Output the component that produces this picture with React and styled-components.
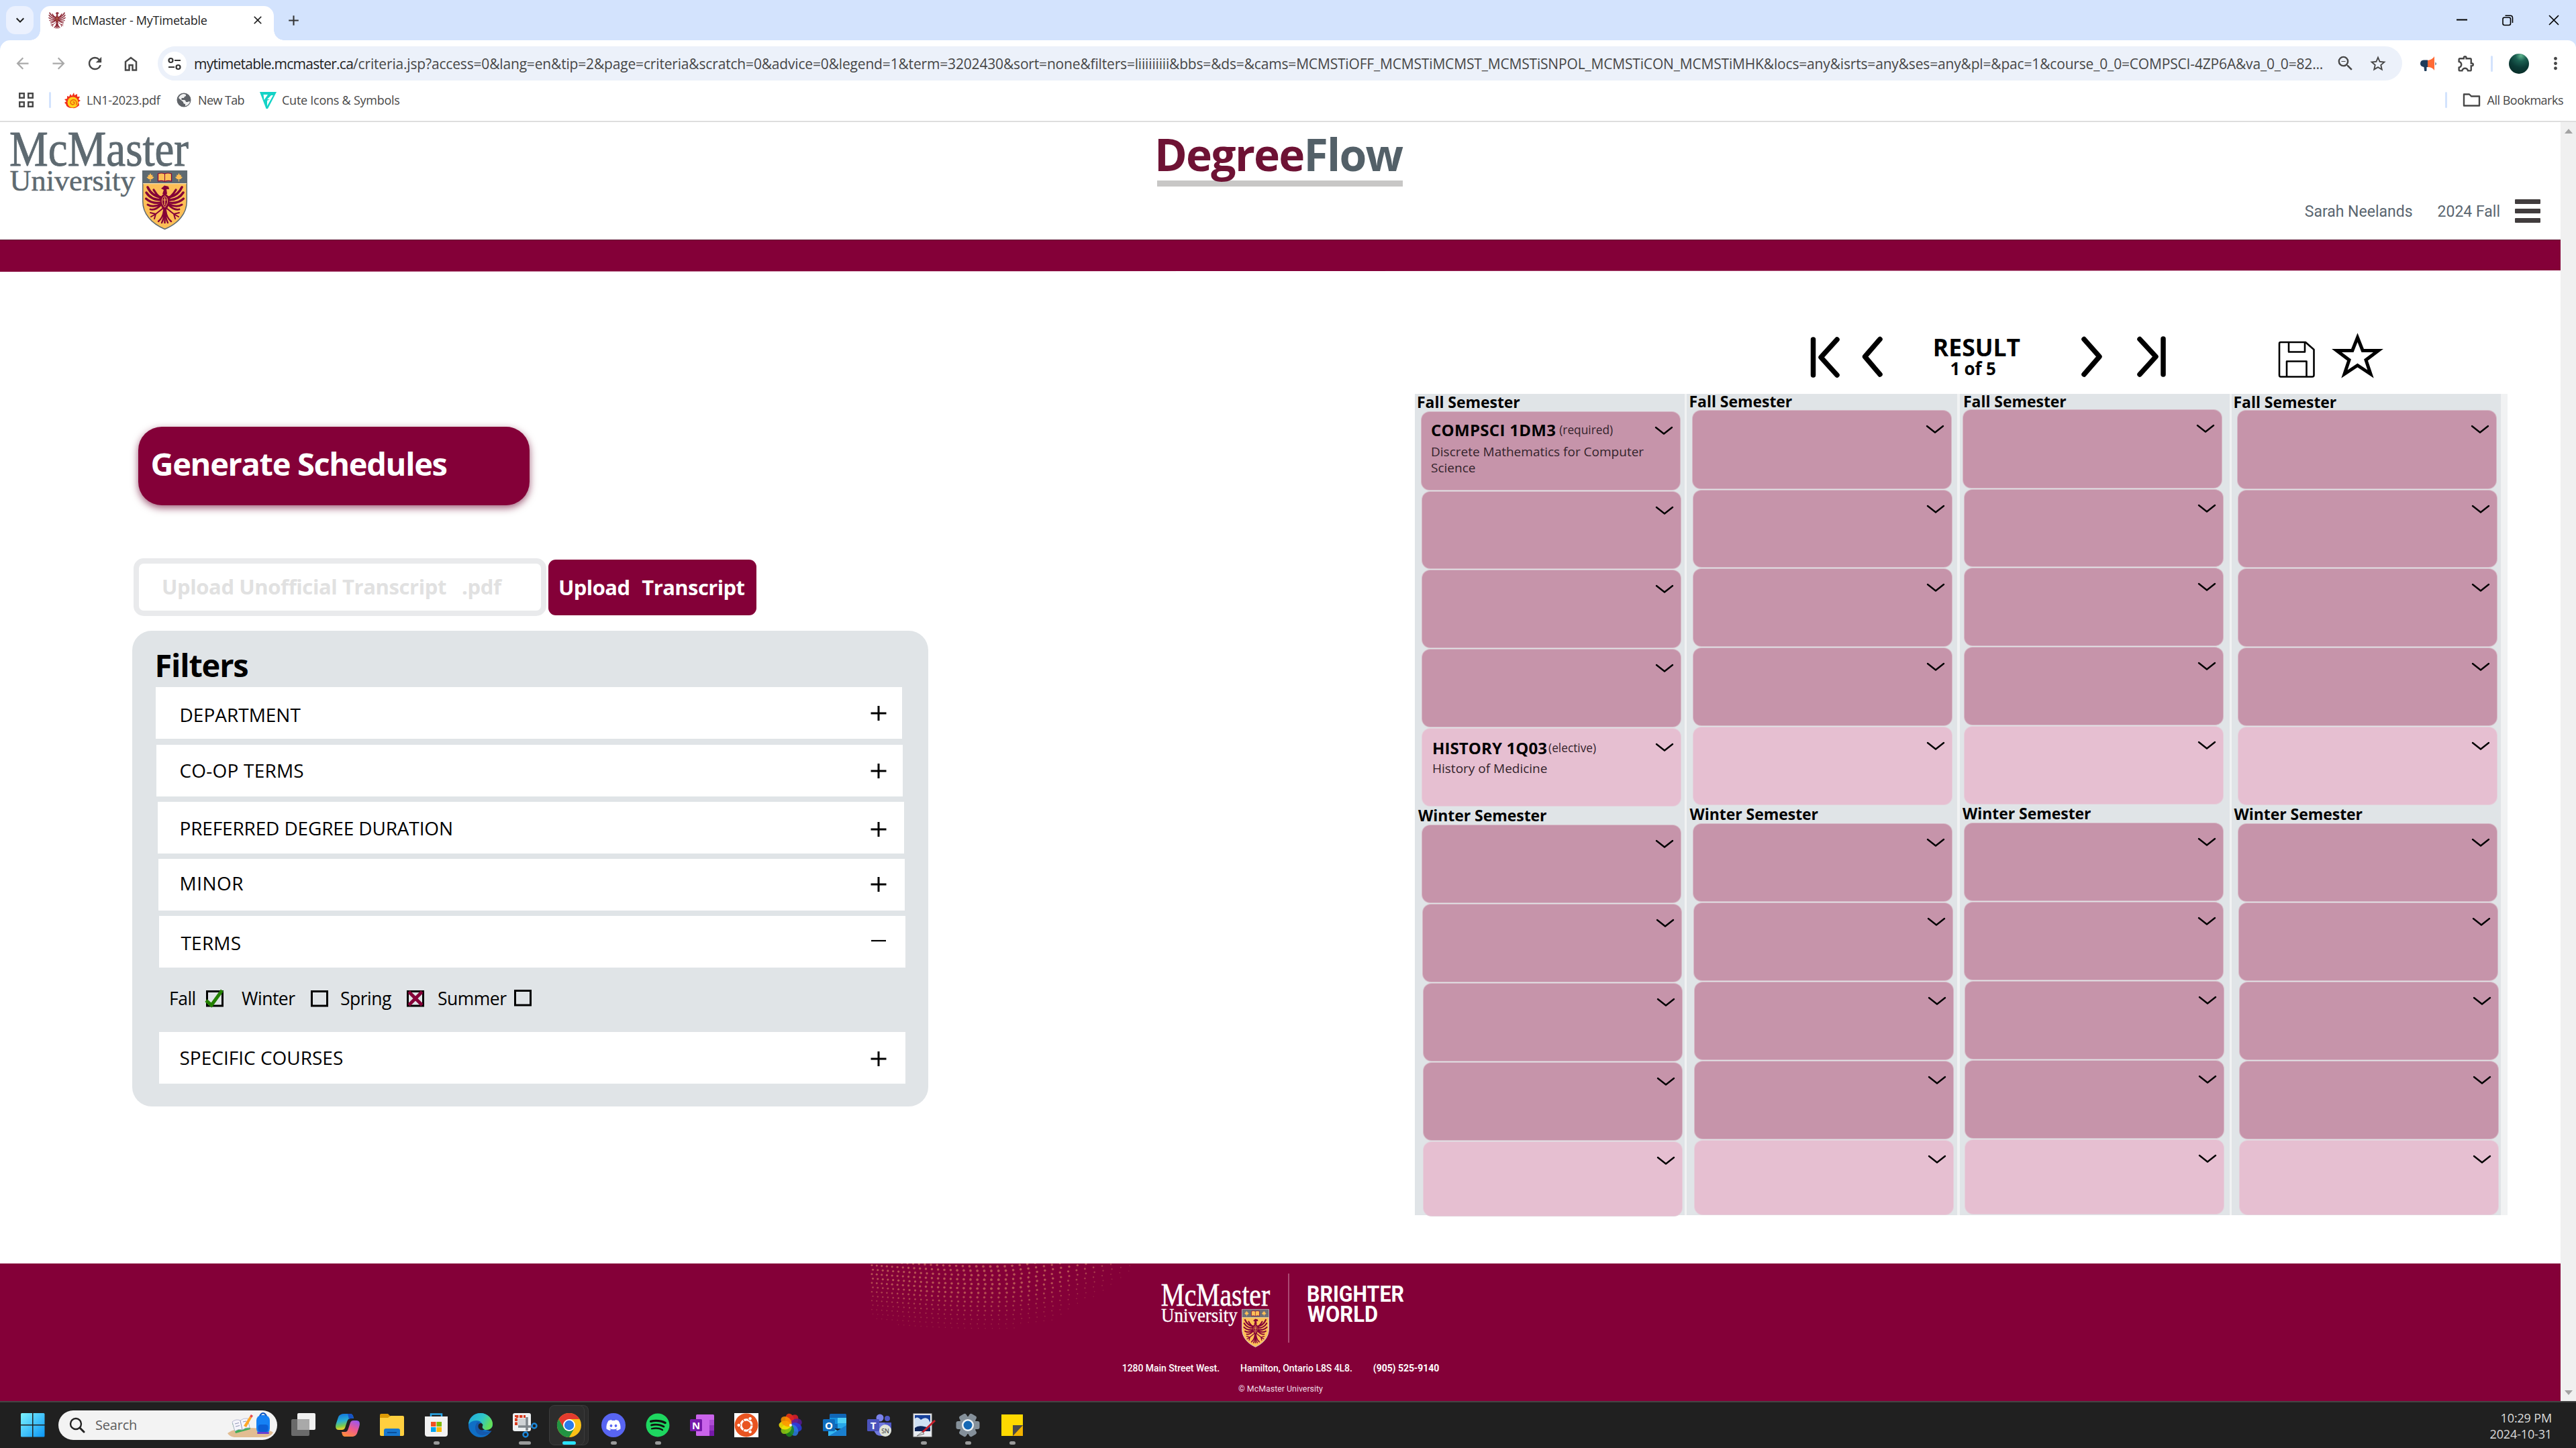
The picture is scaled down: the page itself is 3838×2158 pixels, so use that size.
import React from "react";
import styled, { createGlobalStyle, css } from "styled-components";
import {
  MdArrowBack,
  MdArrowForward,
  MdRefresh,
  MdOutlineZoomOut,
  MdStarBorder,
  MdOutlineExtension,
  MdMoreVert,
  MdKeyboardArrowDown,
  MdClose,
  MdAdd,
} from "react-icons/md";
import { FaDiscord, FaSpotify, FaUbuntu } from "react-icons/fa";

const sans = '"Open Sans", "Noto Sans", sans-serif';
const roboto = 'Roboto, "Open Sans", sans-serif';
const serif = '"Liberation Serif", serif';
const maroon = "#840038";
const slate = "#5e6a71";
const panel = "#e0e4e7";

const GlobalStyle = createGlobalStyle`
  * { box-sizing: border-box; }
  body { margin: 0; background: #fff; font-family: ${sans}; color: #000; }
  svg { display: block; flex: none; }
`;

const Screen = styled.div`
  width: 3838px;
  height: 2158px;
  display: flex;
  flex-direction: column;
  overflow: hidden;
`;

/* ---------- browser chrome ---------- */

const TabStrip = styled.div`
  height: 60px;
  flex: none;
  display: flex;
  background: #d3e3fd;
  padding: 9px 0 0 9px;
`;

const TabSearch = styled.div`
  width: 41px;
  height: 42px;
  border-radius: 14px;
  background: #ebf1fe;
  display: flex;
  align-items: center;
  justify-content: center;
  color: #1f1f1f;
`;

const Tab = styled.div`
  position: relative;
  width: 348px;
  height: 51px;
  margin-left: 10px;
  padding: 0 14px 9px 12px;
  border-radius: 15px 15px 0 0;
  background: #fff;
  display: flex;
  align-items: center;
  &::before,
  &::after {
    content: "";
    position: absolute;
    bottom: 0;
    width: 15px;
    height: 15px;
  }
  &::before {
    left: -15px;
    background: radial-gradient(circle at 0 0, transparent 14.5px, #fff 15px);
  }
  &::after {
    right: -15px;
    background: radial-gradient(circle at 100% 0, transparent 14.5px, #fff 15px);
  }
`;

const TabTitle = styled.span`
  flex: 1;
  margin-left: 9px;
  font-size: 18px;
  line-height: 24px;
  letter-spacing: -0.25px;
  color: #1f1f1f;
  white-space: nowrap;
`;

const NewTab = styled.div`
  width: 42px;
  height: 42px;
  margin-left: 8px;
  display: flex;
  align-items: center;
  justify-content: center;
  color: #333;
`;

const WindowControls = styled.div`
  margin: 0 -1.5px 0 auto;
  height: 42px;
  display: flex;
`;

const WindowButton = styled.div`
  width: 68.5px;
  display: flex;
  align-items: center;
  justify-content: center;
`;

const ToolbarBack = styled.div`
  background: #d3e3fd;
  flex: none;
`;

const Toolbar = styled.div`
  height: 69px;
  display: flex;
  align-items: center;
  padding-left: 6px;
  background: #fff;
  border-radius: 15px 12px 0 0;
`;

const ToolButton = styled.div`
  width: ${(p) => p.$w || 54}px;
  height: 54px;
  display: flex;
  align-items: center;
  justify-content: center;
  color: ${(p) => (p.$muted ? "#a9a9a9" : "#474747")};
`;

const Omnibox = styled.div`
  width: 3344px;
  height: 51px;
  margin: 0 12px 0 13px;
  padding: 0 11px 0 7px;
  border-radius: 26px;
  background: #ecf1fa;
  display: flex;
  align-items: center;
`;

const SiteInfo = styled.div`
  width: 36px;
  height: 36px;
  border-radius: 50%;
  background: #fff;
  display: flex;
  align-items: center;
  justify-content: center;
`;

const Url = styled.div`
  flex: 1;
  margin-left: 11px;
  font-size: 21px;
  line-height: 28px;
  letter-spacing: -0.17px;
  white-space: nowrap;
  color: #474747;
`;

const Domain = styled.span`
  color: #1f1f1f;
  letter-spacing: -0.75px;
`;

const Divider = styled.div`
  width: 3px;
  height: 24px;
  border-radius: 2px;
  background: #d3e3fd;
  margin: ${(p) => p.$m || "0"};
`;

const Avatar = styled.div`
  width: 30px;
  height: 30px;
  border-radius: 50%;
  margin-right: 12px;
  background: radial-gradient(circle at 60% 10%, #5fb58f 0, #1c6152 25%, #0b3b36 55%, #072722 100%);
`;

const BookmarksBar = styled.div`
  height: 53px;
  flex: none;
  display: flex;
  align-items: center;
  padding: 0 19px 11px 28px;
  border-bottom: 2px solid #dedede;
`;

const Bookmark = styled.div`
  display: flex;
  align-items: center;
  gap: ${(p) => p.$gap || 8}px;
  margin-left: ${(p) => p.$ml}px;
  width: ${(p) => (p.$w ? `${p.$w}px` : "auto")};
  font-size: 18px;
  line-height: 24px;
  letter-spacing: ${(p) => p.$ls || -0.25}px;
  color: #474747;
  white-space: nowrap;
`;

const Viewport = styled.div`
  flex: 1;
  min-height: 0;
  display: flex;
`;

const Scrollbar = styled.div`
  width: 23px;
  background: #f0f0f0;
  display: flex;
  flex-direction: column;
  justify-content: space-between;
  align-items: center;
  padding: 10px 0 9px;
`;

/* ---------- page header ---------- */

const Page = styled.div`
  width: 3815px;
  display: flex;
  flex-direction: column;
  background: #fff;
`;

const Header = styled.header`
  height: 175px;
  flex: none;
  display: grid;
  grid-template-columns: 1724px 367px 1fr;
`;

const LogoCell = styled.div`
  padding: 0 0 0 12px;
`;

const LogoSvg = styled.svg`
  overflow: visible;
`;

const Brand = styled.div`
  padding-top: 8px;
`;

const BrandName = styled.div`
  margin-left: -4px;
  font-size: 66px;
  font-weight: 700;
  line-height: 79px;
  letter-spacing: -1.75px;
  color: #6e1234;
  white-space: nowrap;
  position: relative;
  z-index: 1;
`;

const BrandTail = styled.span`
  color: #536068;
`;

const BrandRule = styled.div`
  width: 366px;
  height: 9px;
  background: #c8c7c6;
`;

const UserBar = styled.div`
  display: flex;
  justify-content: flex-end;
  align-items: center;
  padding: 90px 30px 0 0;
  font-family: ${roboto};
  font-size: 23px;
  line-height: 30px;
  color: #5a6670;
  white-space: nowrap;
`;

const UserName = styled.span`
  padding-top: 2px;
  margin-right: 37px;
`;

const Term = styled.span`
  padding-top: 2px;
  margin-right: 22px;
`;

const Hamburger = styled.div`
  width: 38px;
  display: flex;
  flex-direction: column;
  gap: 7.5px;
`;

const HamburgerBar = styled.div`
  height: 6.5px;
  border-radius: 1px;
  background: #413c3d;
`;

const Band = styled.div`
  height: 48px;
  flex: none;
  background: ${maroon};
  border-top: 1px solid #5c1030;
  clip-path: polygon(0 0, 100% 0, 100% 46px, 0 48px);
`;

/* ---------- main ---------- */

const Main = styled.main`
  height: 1478px;
  flex: none;
  display: grid;
  grid-template-columns: 1910.5px 1fr;
  padding-left: 197px;
`;

const LeftColumn = styled.section`
  padding-top: 231px;
`;

const GenerateButton = styled.div`
  width: 583px;
  height: 117px;
  margin-left: 9px;
  padding: 22px 0 0 18.5px;
  border-radius: 35px;
  background: ${maroon};
  box-shadow: 0 4px 12px rgba(105, 0, 45, 0.65);
  color: #fff;
  font-size: 47px;
  font-weight: 700;
  line-height: 66px;
  letter-spacing: -1.35px;
  white-space: nowrap;
`;

const UploadRow = styled.div`
  display: flex;
  align-items: flex-start;
  margin: 79px 0 22px 2px;
`;

const uploadText = css`
  font-size: 31px;
  font-weight: 700;
  line-height: 44px;
  letter-spacing: -0.48px;
  white-space: pre;
`;

const UploadField = styled.div`
  ${uploadText}
  width: 615px;
  height: 86px;
  padding: 12px 0 0 34px;
  border: 8px solid #e9eaec;
  border-radius: 15px;
  letter-spacing: -0.4px;
  color: #e1e1e1;
`;

const UploadButton = styled.div`
  ${uploadText}
  width: 310px;
  height: 83px;
  margin: 2px 0 0 3px;
  padding: 19px 0 0 15px;
  border-radius: 11px;
  background: ${maroon};
  letter-spacing: -0.6px;
  word-spacing: 1.5px;
  color: #fff;
`;

const FilterPanel = styled.div`
  width: 1186px;
  height: 709px;
  padding: 17px 0 0 35px;
  border-radius: 29px;
  background: ${panel};
`;

const FilterTitle = styled.h2`
  margin: 0 0 0 -1.5px;
  padding-top: 1px;
  height: 67px;
  font-size: 47px;
  font-weight: 700;
  line-height: 67px;
  letter-spacing: -1.2px;
`;

const FilterRow = styled.div`
  display: flex;
  justify-content: space-between;
  align-items: flex-start;
  width: 1112px;
  height: 77px;
  margin: ${(p) => p.$gap}px 0 0 ${(p) => p.$shift}px;
  padding: 0 ${(p) => 22 + p.$shift}px 0 ${(p) => 35.5 - p.$shift}px;
  background: #fff;
`;

const FilterLabel = styled.span`
  padding: ${(p) => p.$base - 29}px 0 0 ${(p) => p.$in || 0}px;
  font-size: 28px;
  line-height: 36px;
  letter-spacing: ${(p) => p.$ls || 0}px;
  white-space: nowrap;
`;

const IconSlot = styled.span`
  padding-top: ${(p) => p.$top}px;
`;

const TermChecks = styled.div`
  height: 96px;
  padding: 33.5px 0 0 20px;
  display: grid;
  grid-template-columns: 55px 53px 103px 44px 99px 46px 114px 30px;
  align-items: start;
  font-size: 26.5px;
  line-height: 24px;
  letter-spacing: -0.5px;
`;

const CheckBox = styled.svg`
  overflow: visible;
  margin-top: ${(p) => p.$up || 0}px;
`;

/* ---------- schedule ---------- */

const RightColumn = styled.section`
  display: flex;
  flex-direction: column;
`;

const ResultBar = styled.div`
  height: 182px;
  flex: none;
  display: flex;
  align-items: flex-start;
  padding: 95px 0 0 587.5px;
`;

const BarIcon = styled.svg`
  margin: ${(p) => p.$mt || 0}px 0 0 ${(p) => p.$ml || 0}px;
`;

const ResultText = styled.div`
  width: 132px;
  margin: -4px 0 0 71px;
  text-align: center;
  font-weight: 700;
  white-space: nowrap;
`;

const ResultTitle = styled.div`
  font-size: 35.5px;
  line-height: 42px;
`;

const ResultCount = styled.div`
  margin: -3px 11px 0 0;
  font-size: 26px;
  line-height: 28px;
  letter-spacing: -0.2px;
`;

const Board = styled.div`
  width: 1628px;
  height: 1224px;
  display: flex;
  gap: 3.5px;
  background: #f1f2f3;
`;

const YearColumn = styled.div`
  width: ${(p) => p.$w}px;
  flex: none;
  background: ${panel};
`;

const SemesterLabel = styled.div`
  height: ${(p) => p.$h}px;
  padding-left: ${(p) => p.$left + 1.5}px;
  font-size: 23px;
  font-weight: 700;
  line-height: ${(p) => p.$lh}px;
  letter-spacing: -0.05px;
  white-space: nowrap;
`;

const CourseList = styled.div`
  display: flex;
  flex-direction: column;
  gap: 3px;
  padding-left: ${(p) => p.$left + 0.5}px;
`;

const Course = styled.div`
  width: 385px;
  height: ${(p) => p.$h}px;
  margin-left: ${(p) => p.$nudge}px;
  padding-right: 10px;
  display: flex;
  justify-content: space-between;
  align-items: flex-start;
  border-radius: 12px;
  background: ${(p) => (p.$elective ? "#e6bfd1" : "#c694aa")};
  box-shadow: 0 0 0 1px ${(p) => (p.$elective ? "#e4d0db" : "#d6bac7")};
`;

const CourseText = styled.div`
  padding: ${(p) => (p.$elective ? "13px 0 0 15px" : "10.5px 0 0 14.5px")};
`;

const CourseHead = styled.div`
  display: flex;
  line-height: 32px;
  white-space: nowrap;
`;

const CourseCode = styled.span`
  font-size: 24px;
  font-weight: 700;
  letter-spacing: ${(p) => p.$ls}px;
`;

const CourseKind = styled.span`
  margin-left: ${(p) => p.$ml}px;
  font-size: 17.3px;
  color: #33232b;
`;

const CourseName = styled.div`
  width: 330px;
  margin-top: ${(p) => p.$mt}px;
  font-size: 19px;
  line-height: 24px;
  color: #33232b;
`;

const ChevronSlot = styled.div`
  margin-left: auto;
  padding-top: 20.5px;
`;

/* ---------- footer ---------- */

const Footer = styled.footer`
  position: relative;
  height: 205px;
  flex: none;
  display: flex;
  flex-direction: column;
  align-items: center;
  padding-top: 15px;
  background: ${maroon};
  color: #fff;
  font-family: ${roboto};
  white-space: nowrap;
`;

const Halftone = styled.svg`
  position: absolute;
  left: 1292px;
  top: 0;
`;

const FooterMark = styled.svg`
  overflow: visible;
  margin-left: 5px;
`;

const Address = styled.div`
  display: flex;
  gap: 31px;
  margin: 19px 0 0 1px;
  font-size: 14px;
  line-height: 20px;
  font-weight: 500;
  letter-spacing: -0.05px;
`;

const Phone = styled.span`
  font-weight: 700;
`;

const Copyright = styled.div`
  margin: 12px -1px 0 0;
  font-size: 12.4px;
  line-height: 18px;
  color: #eedbe4;
`;

/* ---------- taskbar ---------- */

const Taskbar = styled.div`
  height: 70px;
  flex: none;
  display: flex;
  align-items: center;
  padding: 0 36px 0 31px;
  background: #202020;
  border-top: 2px solid #444444;
`;

const SearchPill = styled.div`
  width: 326px;
  height: 44px;
  margin: 0 6px 0 20px;
  padding: 0 6px 0 16px;
  display: flex;
  align-items: center;
  border-radius: 22px;
  background: #f3f3f3;
  color: #5c5c5c;
  font-size: 20px;
  line-height: 28px;
  letter-spacing: -0.2px;
`;

const SearchLabel = styled.span`
  flex: 1;
  margin-left: 15px;
`;

const TaskItem = styled.div`
  position: relative;
  width: 66px;
  height: 68px;
  display: flex;
  align-items: center;
  justify-content: center;
`;

const ActiveTile = styled.div`
  position: absolute;
  left: 3px;
  top: 4px;
  width: 53px;
  height: 60px;
  border-radius: 8px;
  background: #2d2d2d;
  border: 1px solid #3c3c3c;
  box-shadow: 6px 0 0 -1px #2b2b2b, 6px 0 0 0 #3a3a3a;
  z-index: 0;
`;

const TaskIcon = styled.svg`
  position: relative;
  z-index: 1;
  overflow: visible;
`;

const Running = styled.div`
  position: absolute;
  bottom: 5px;
  left: 50%;
  width: ${(p) => p.$w || 9}px;
  height: 5px;
  margin-left: ${(p) => -(p.$w || 9) / 2}px;
  border-radius: 3px;
  background: ${(p) => (p.$active ? "#29e3ff" : "#9a9a9a")};
`;

const Clock = styled.div`
  margin-left: auto;
  padding-top: 1px;
  text-align: right;
  font-size: 18px;
  line-height: 24px;
  letter-spacing: -0.15px;
  color: #dcdcdc;
`;

/* ---------- drawings ---------- */

const Wing = () => (
  <g fill="none" strokeLinecap="round" stroke="currentColor">
    <path d="M28 40 Q14 38 8 25" strokeWidth="3.600" />
    <path d="M28 44 Q13 44 6 33" strokeWidth="3.400" />
    <path d="M27 48 Q14 50 5.500 42" strokeWidth="3.200" />
    <path d="M28 50 Q16 56 8 51" strokeWidth="3" />
    <path d="M29 50 Q20 60 12 58" strokeWidth="2.800" />
    <path d="M27 41 Q21 36 17 29" strokeWidth="3.200" />
    <path d="M30 57 L20 65 L12 63 M20 65 L13 69 M20 65 L18 72" strokeWidth="2" />
    <path d="M32 60 Q31 70 24 76 M33 60 Q33 70 29 78" strokeWidth="2.400" />
  </g>
);

const Eagle = ({ field = "#fdbf57", ink = maroon }) => (
  <g color={ink}>
    <Wing />
    <g transform="translate(67 0) scale(-1 1)">
      <Wing />
    </g>
    <path d="M33.500 34 C42 38 43 50 33.500 62 C24 50 25 38 33.500 34Z" fill={ink} />
    <path d="M28 27 L33 22.500 L39 24 L40 28 L36 28 L37 35 L30 35 L32 29Z" fill={ink} />
    <path d="M33.500 38 C39 41 39 49 33.500 55 C28 49 28 41 33.500 38Z" fill="none" stroke={field} strokeWidth="1" />
    <path d="M33.500 40 V52 M30.500 44 H36.500" stroke={field} strokeWidth="1.200" />
    <path d="M33.500 58 V79" stroke={ink} strokeWidth="2.500" />
  </g>
);

const Shield = ({ edge = slate, head = slate }) => (
  <g>
    <path d="M.7 .7 H66.300 V46 C66.300 64 54 79 33.500 87.500 C13 79 .7 64 .7 46Z" fill="#fdbf57" stroke={edge} strokeWidth="1.500" />
    <path d="M1 1 H66 V19 H1Z" fill={head} />
    <path d="M1 19.700 H66" stroke="#f3e3c2" strokeWidth="1" />
    {[12, 54.5].map((x) => (
      <path key={x} transform={`translate(${x} 10)`} d="M0 -6 L1.500 -3 L3.500 -3.500 L3 -1 L5.500 0 L2.500 3 L.6 3 V6.500 H-.6 V3 L-2.500 3 L-5.500 0 L-3 -1 L-3.500 -3.500 L-1.500 -3Z" fill="#fdbf57" />
    ))}
    <path d="M23.500 5 Q29 3 33.200 5 Q38 3 43.500 5 V16 Q38 14.500 33.500 16.500 Q29 14.500 23.500 16Z" fill="#fdbf57" stroke={maroon} strokeWidth="1.200" />
    <path d="M33.500 5 V16" stroke={maroon} strokeWidth="1" />
    <Eagle />
  </g>
);

const McMasterMark = ({ color, edge, head }) => (
  <g>
    <g fill={color} stroke={color} fontFamily={serif}>
      <text x="2" y="64.500" fontSize="75" strokeWidth=".9" textLength="267" lengthAdjust="spacingAndGlyphs">McMaster</text>
      <text x="2.500" y="102" fontSize="45" strokeWidth=".5" textLength="187" lengthAdjust="spacingAndGlyphs">University</text>
    </g>
    <g transform="translate(200 72)">
      <Shield edge={edge} head={head} />
    </g>
  </g>
);

const FooterLogo = () => (
  <FooterMark width="363" height="112" viewBox="0 0 363 112">
    <g transform="translate(-.5 6.500) scale(.608 .645)">
      <McMasterMark color="#fff" edge="#d9d3d6" head="#6d6f78" />
    </g>
    <path d="M191 0 V103" stroke="#c77c9b" strokeWidth="1.200" />
    <g fill="#fff" fontFamily={roboto} fontWeight="700" fontSize="32.500">
      <text x="218" y="42" textLength="145" lengthAdjust="spacingAndGlyphs">BRIGHTER</text>
      <text x="219" y="71.500" textLength="105" lengthAdjust="spacingAndGlyphs">WORLD</text>
    </g>
  </FooterMark>
);

const halftoneEdge = [
  [0, 78], [60, 96], [160, 103], [215, 98], [280, 85], [325, 58], [366, 34], [392, 10], [400, 0],
];

const edgeAt = (x) => {
  for (let i = 1; i < halftoneEdge.length; i += 1) {
    const [x0, y0] = halftoneEdge[i - 1];
    const [x1, y1] = halftoneEdge[i];
    if (x <= x1) return y0 + ((y1 - y0) * (x - x0)) / (x1 - x0);
  }
  return -1;
};

const halftoneDots = [];
for (let r = -4; r < 24; r += 1) {
  for (let c = 0; c < 38; c += 1) {
    const x = 7 + 7.2 * c + 0.085 * c * c + (r % 2) * 1.5;
    const u = x / 260;
    const y =
      2 + r * 6.6 + 9 * Math.sin(Math.min(u, 1.1) * 2.2) - 36 * Math.max(0, u - 0.75) ** 1.6 * (1.2 - r / 22);
    const limit = edgeAt(x);
    if (y > -1 && y < limit) {
      const depth = Math.min(1, (limit - y) / 60);
      const mid = 1 - Math.min(1, Math.abs(u - 0.7) * 0.8);
      halftoneDots.push([x, y, 0.7 + 1.2 * depth * (0.45 + 0.55 * mid), 0.3 + 0.5 * depth]);
    }
  }
}

const Chevron = () => (
  <svg width="28" height="14" viewBox="0 0 28 14">
    <path d="M2 2 L14 11.500 L26 2" fill="none" stroke="#000" strokeWidth="2.400" strokeLinecap="round" strokeLinejoin="round" />
  </svg>
);

const Toggle = ({ open }) => (
  <svg width="26" height="26" viewBox="0 0 26 26">
    <path d={open ? "M2 13 H24" : "M1.500 13 H24.500 M13 2 V24"} stroke="#000" strokeWidth={open ? 2.2 : 3} />
  </svg>
);

const TermBox = ({ state, up }) => (
  <CheckBox $up={up} width="26" height="25" viewBox="0 0 26 25">
    <rect x="1.500" y="1.500" width="23" height="21.500" fill="none" stroke="#000" strokeWidth="3" />
    {state === "yes" && <path d="M0 15 L8 22 L24 0" fill="none" stroke="#238000" strokeWidth="5" />}
    {state === "no" && <path d="M3 2 L23 22 M23 2 L3 22" stroke="#840038" strokeWidth="5" />}
  </CheckBox>
);

const filters = [
  { label: "DEPARTMENT", shift: 0, gap: 0, base: 52, icon: 26 },
  { label: "CO-OP TERMS", shift: 1, gap: 9, base: 49, icon: 26, ls: 0.2 },
  { label: "PREFERRED DEGREE DURATION", shift: 3, gap: 8, base: 50, icon: 28, ls: -0.15 },
  { label: "MINOR", shift: 4, gap: 8, base: 47, icon: 25, ls: 0.5 },
  { label: "TERMS", shift: 5, gap: 8, base: 51, icon: 23.5, ls: 0.2, indent: 2, open: true },
  { label: "SPECIFIC COURSES", shift: 5, gap: 0, base: 49, icon: 27 },
];

const years = [
  { w: 402, left: 9.5, fallH: 27, fallLh: 24, fallX: 2, winterX: 4 },
  { w: 403, left: 8, fallH: 25, fallLh: 22, fallX: 2, winterX: 3 },
  { w: 402, left: 5, fallH: 24, fallLh: 22, fallX: 4, winterX: 3 },
  { w: 401, left: 8, fallH: 25, fallLh: 24, fallX: 1, winterX: 2 },
];

const fallCourses = [
  { h: 116, nudge: 0 },
  { h: 114, nudge: 1.5 },
  { h: 115, nudge: 1.5 },
  { h: 115, nudge: 1.5 },
  { h: 115, nudge: 1.5, elective: true },
];

const winterCourses = [
  { h: 115, nudge: 1.5 },
  { h: 115, nudge: 2.4 },
  { h: 115, nudge: 3 },
  { h: 115, nudge: 3 },
  { h: 110, nudge: 3, elective: true },
];

const firstYear = {
  0: { code: "COMPSCI 1DM3", kind: "(required)", name: "Discrete Mathematics for Computer Science", ls: 0.3, ml: 5, mt: 4 },
  4: { code: "HISTORY 1Q03", kind: "(elective)", name: "History of Medicine", ls: 0.1, ml: 2, mt: 2 },
};

const CourseCard = ({ slot, info }) => (
  <Course $h={slot.h} $nudge={slot.nudge} $elective={slot.elective}>
    {info && (
      <CourseText $elective={slot.elective}>
        <CourseHead>
          <CourseCode $ls={info.ls}>{info.code}</CourseCode>
          <CourseKind $ml={info.ml}>{info.kind}</CourseKind>
        </CourseHead>
        <CourseName $mt={info.mt}>{info.name}</CourseName>
      </CourseText>
    )}
    <ChevronSlot>
      <Chevron />
    </ChevronSlot>
  </Course>
);

/* 36 x 36 application icons */

const TaskViewIcon = () => (
  <g>
    <rect x="9" y="0" width="27" height="25" rx="2" fill="#f1f1f1" />
    <rect x="0" y="9" width="27" height="25" rx="2" fill="#6a6a6a" />
    <rect x="9" y="9" width="18" height="16" fill="#a9a9a9" />
  </g>
);

const CopilotIcon = () => (
  <g>
    <defs>
      <linearGradient id="copA" x1="0" y1="0" x2="0.2" y2="1">
        <stop offset="0" stopColor="#0f6fe0" />
        <stop offset=".5" stopColor="#2bb0d0" />
        <stop offset=".8" stopColor="#7ccb4a" />
        <stop offset="1" stopColor="#f4d02c" />
      </linearGradient>
      <linearGradient id="copB" x1="0.8" y1="0" x2="0.3" y2="1">
        <stop offset="0" stopColor="#9a56f0" />
        <stop offset=".5" stopColor="#ee5a8f" />
        <stop offset="1" stopColor="#ff8a3c" />
      </linearGradient>
    </defs>
    <path d="M12 1 H22 C25 1 26 3 27 8 H22 C19 8 18 10 17 13 L14 22 C13 24 12 25 9 25 H5 C0 25 -1 21 1 15 L4 6 C5 3 8 1 12 1Z" fill="url(#copA)" />
    <path d="M24 35 H14 C11 35 10 33 9 28 H14 C17 28 18 26 19 23 L22 14 C23 12 24 11 27 11 H31 C36 11 37 15 35 21 L32 30 C31 33 28 35 24 35Z" fill="url(#copB)" />
    <path d="M18 1 H22 C25 1 26 3 27 8 H22 L20 9Z" fill="#1653c4" />
  </g>
);

const ExplorerIcon = () => (
  <g>
    <path d="M0 3 Q0 1 2 1 H12 L16 5 V12 H0Z" fill="#dc9a06" />
    <path d="M0 7 H12 L16 4 H34 Q36 4 36 6 V32 Q36 34 34 34 H2 Q0 34 0 32Z" fill="#ffcf3f" />
    <path d="M6 34 V26 Q6 23 9 23 H27 Q30 23 30 26 V34Z" fill="#1777cf" />
    <path d="M11 29 H25" stroke="#0b4f9a" strokeWidth="2" />
  </g>
);

const StoreIcon = () => (
  <g>
    <path d="M10 6 V1.500 H26 V6" fill="none" stroke="#29a7e8" strokeWidth="2.500" />
    <path d="M1 5 H35 V31 Q35 35 31 35 H5 Q1 35 1 31Z" fill="#f2f2f2" />
    <rect x="10" y="13" width="7.500" height="7" fill="#f25022" />
    <rect x="18.500" y="13" width="7.500" height="7" fill="#7fba00" />
    <rect x="10" y="21" width="7.500" height="7" fill="#00a4ef" />
    <rect x="18.500" y="21" width="7.500" height="7" fill="#ffb900" />
  </g>
);

const EdgeIcon = () => (
  <g>
    <defs>
      <linearGradient id="edgeA" x1="0" y1="0" x2="1" y2=".4">
        <stop offset="0" stopColor="#1fa8dd" />
        <stop offset=".6" stopColor="#2fc6c8" />
        <stop offset="1" stopColor="#63e05a" />
      </linearGradient>
    </defs>
    <circle cx="18" cy="18" r="18" fill="#0f6fc6" />
    <path d="M24 24.500 C30 26.500 36 22 37 17 V30 L33 27Z" fill="#202020" />
    <path d="M0 18 C0 7 8 0 18 0 C28 0 36 8 36 16 C36 22 32 25 27 25 C22 25 20 23 21 20 C22 16 18 11 12 11 C6 11 1 14 0 18Z" fill="url(#edgeA)" />
    <path d="M13 14 C9 18 9 25 13 30 C17 34 24 34 31 30 C33 29 35 26 34 26 C31 28 22 29 17 24 C14 21 15 16 17 13Z" fill="#1559ad" />
    <path d="M14.500 19 C15 15 20 13 21.500 18 C20 20 20 23 24 24.500 C19 27 14 24 14.500 19Z" fill="#202020" />
  </g>
);

const SnipIcon = () => (
  <g>
    <rect x="0" y="0" width="27" height="27" rx="3" fill="#eef1f3" />
    <path d="M5 18 V5 H19" fill="none" stroke="#d83b1e" strokeWidth="4" strokeDasharray="4.500 1.500" />
    <rect x="7.500" y="8" width="13" height="10" fill="#cfd3d6" />
    <path d="M21 6 V26 M8 20 H30" stroke="#7f868c" strokeWidth="3.500" />
    <circle cx="32" cy="19" r="3.500" fill="none" stroke="#1b86d8" strokeWidth="2.500" />
    <circle cx="19" cy="32" r="3.500" fill="none" stroke="#1b86d8" strokeWidth="2.500" />
  </g>
);

const ChromeIcon = () => (
  <g>
    <circle cx="18" cy="18" r="18" fill="#fbc116" />
    <path d="M18 9 H33.600 A18 18 0 0 0 2.400 9 L10.200 22.500Z" fill="#e33b2e" />
    <path d="M2.400 9 A18 18 0 0 0 18 36 L25.800 22.500 L18 27 L10.200 22.500Z" fill="#229342" />
    <circle cx="18" cy="18" r="9" fill="#fff" />
    <circle cx="18" cy="18" r="7.200" fill="#2a7bea" />
  </g>
);

const DiscordIcon = () => (
  <g>
    <circle cx="18" cy="18" r="18" fill="#5865f2" />
    <FaDiscord x="6.500" y="6.500" size={23} color="#fff" />
  </g>
);

const SpotifyIcon = () => (
  <g>
    <circle cx="18" cy="18" r="15" fill="#111" />
    <FaSpotify x="0" y="0" size={36} color="#1ed760" />
  </g>
);

const OneNoteIcon = () => (
  <g>
    <rect x="9" y="2" width="27" height="32" rx="1.500" fill="#ca64ea" />
    <rect x="29" y="10" width="7" height="8" fill="#ae4bd5" />
    <rect x="29" y="18" width="7" height="8" fill="#9332bf" />
    <rect x="29" y="26" width="7" height="8" fill="#7719aa" />
    <rect x="0" y="9" width="18" height="18" rx="1.500" fill="#7719aa" />
    <text x="9" y="23.500" fontFamily={sans} fontWeight="700" fontSize="15" fill="#fff" textAnchor="middle">N</text>
  </g>
);

const UbuntuIcon = () => (
  <g>
    <rect width="36" height="36" fill="#fff" />
    <FaUbuntu x="0" y="0" size={36} color="#e95420" />
  </g>
);

const wheel = ["#f43b12", "#e0202c", "#5b1a99", "#2b3ee0", "#2a7de0", "#1b8a1c", "#8fce12", "#ffe800", "#ff9500"];

const WheelIcon = () => (
  <g>
    {wheel.map((c, i) => (
      <ellipse key={c} cx="18" cy="9.500" rx="6.500" ry="9" fill={c} fillOpacity=".85" transform={`rotate(${i * 40 - 10} 18 18)`} />
    ))}
    <circle cx="18" cy="18" r="2" fill="#f7f2df" />
  </g>
);

const OutlookIcon = () => (
  <g>
    <rect x="10" y="1" width="25" height="22" rx="1.500" fill="#1066b5" />
    <rect x="10" y="7" width="12" height="9" fill="#1490df" />
    <rect x="22" y="7" width="13" height="9" fill="#50d0f5" />
    <rect x="22" y="15" width="13" height="8" fill="#28a8ea" />
    <path d="M8 34 V18 L35 34 Z" fill="#35b8f1" />
    <path d="M35 18 V34 H9 Z" fill="#1a80cf" />
    <rect x="0" y="9" width="18" height="18" rx="1.500" fill="#0f6cbd" />
    <text x="9" y="23.500" fontFamily={sans} fontWeight="700" fontSize="15" fill="#fff" textAnchor="middle">O</text>
  </g>
);

const TeamsIcon = () => (
  <g>
    <circle cx="19" cy="7" r="5.500" fill="#7b83eb" />
    <circle cx="30" cy="8" r="4" fill="#5059c9" />
    <path d="M10 14 H36 V26 Q34 34 22 34 Q11 34 10 24Z" fill="#7079df" />
    <path d="M26 14 H36 V26 Q34 30 28 30Z" fill="#5059c9" />
    <rect x="0" y="9" width="18" height="18" rx="1.500" fill="#4b53bc" />
    <text x="9" y="23.500" fontFamily={sans} fontWeight="700" fontSize="15" fill="#fff" textAnchor="middle">T</text>
    <circle cx="27" cy="26" r="9" fill="#dfe3d9" />
    <text x="27" y="29.500" fontFamily={sans} fontSize="9" fill="#333" textAnchor="middle">SN</text>
  </g>
);

const PaintIcon = () => (
  <g>
    <rect x="3" y="1" width="27" height="34" fill="#e9edf2" stroke="#c6c6c6" />
    <rect x="5" y="3" width="23" height="24" fill="#17409a" />
    <path d="M5 8 Q9 4 14 10 Q20 5 25 9 L28 14 V20 Q18 24 5 26Z" fill="#cfe0f4" />
    <path d="M5 22 Q12 16 28 23 V27 H5Z" fill="#0c2358" />
    <path d="M35 11 L16 29" stroke="#c8202c" strokeWidth="3" />
    <path d="M16 28 L8 34 L19 31Z" fill="#dcdcdc" stroke="#777" />
  </g>
);

const SettingsIcon = () => (
  <g>
    {[0, 60, 120].map((a) => (
      <rect key={a} x="12" y="0.500" width="12" height="35" rx="3" fill="#85909a" transform={`rotate(${a + 30} 18 18)`} />
    ))}
    <circle cx="18" cy="18" r="13" fill="#85909a" />
    <circle cx="18" cy="18" r="9" fill="#eef3f6" />
    <circle cx="18" cy="18" r="6.500" fill="#1668b4" />
  </g>
);

const StickyIcon = () => (
  <g>
    <path d="M2 2 H34 V18 H19 V34 H2Z" fill="#ffd900" />
    <path d="M19 18 H34 L19 34Z" fill="#4a4a4a" />
    <path d="M34 18 V34 H19Z" fill="#f2b200" />
  </g>
);

const apps = [
  { id: "taskview", Icon: TaskViewIcon },
  { id: "copilot", Icon: CopilotIcon },
  { id: "explorer", Icon: ExplorerIcon },
  { id: "store", Icon: StoreIcon, run: 9 },
  { id: "edge", Icon: EdgeIcon },
  { id: "snip", Icon: SnipIcon, run: 18 },
  { id: "chrome", Icon: ChromeIcon, run: 20, active: true },
  { id: "discord", Icon: DiscordIcon, run: 9 },
  { id: "spotify", Icon: SpotifyIcon, run: 9 },
  { id: "onenote", Icon: OneNoteIcon },
  { id: "ubuntu", Icon: UbuntuIcon },
  { id: "wheel", Icon: WheelIcon },
  { id: "outlook", Icon: OutlookIcon },
  { id: "teams", Icon: TeamsIcon },
  { id: "paint", Icon: PaintIcon, run: 9 },
  { id: "settings", Icon: SettingsIcon, run: 9 },
  { id: "sticky", Icon: StickyIcon, run: 9 },
];

const BrowserChrome = () => (
  <>
    <TabStrip>
      <TabSearch>
        <MdKeyboardArrowDown size={24} />
      </TabSearch>
      <Tab>
        <svg width="26" height="26" viewBox="4 20 59 60">
          <Eagle field="#c9894d" ink="#8a2432" />
        </svg>
        <TabTitle>McMaster - MyTimetable</TabTitle>
        <MdClose size={20} color="#1f1f1f" />
      </Tab>
      <NewTab>
        <MdAdd size={25} />
      </NewTab>
      <WindowControls>
        <WindowButton>
          <svg width="16" height="16" viewBox="0 0 16 16"><path d="M0 7.500 H16" stroke="#000" strokeWidth="2" /></svg>
        </WindowButton>
        <WindowButton>
          <svg width="17" height="17" viewBox="0 0 17 17" fill="none" stroke="#000" strokeWidth="1.600">
            <rect x="1" y="4" width="11.500" height="11.500" rx="2.500" />
            <path d="M4.500 1.200 H12 Q15.500 1.200 15.500 4.700 V12" />
          </svg>
        </WindowButton>
        <WindowButton>
          <svg width="16" height="16" viewBox="0 0 16 16"><path d="M1 1 L15 15 M15 1 L1 15" stroke="#000" strokeWidth="1.600" /></svg>
        </WindowButton>
      </WindowControls>
    </TabStrip>
    <ToolbarBack>
      <Toolbar>
        <ToolButton $muted><MdArrowBack size={27} /></ToolButton>
        <ToolButton $muted><MdArrowForward size={27} /></ToolButton>
        <ToolButton><MdRefresh size={29} /></ToolButton>
        <ToolButton>
          <svg width="20" height="22" viewBox="0 0 20 22">
            <path d="M2 20.500 V8 L10 2 L18 8 V20.500 H12.500 V13 H7.500 V20.500Z" fill="none" stroke="#474747" strokeWidth="2.500" />
          </svg>
        </ToolButton>
        <Omnibox>
          <SiteInfo>
            <svg width="20" height="20" viewBox="0 0 20 20" fill="none" stroke="#333" strokeWidth="2.200">
              <circle cx="4.500" cy="5" r="3" />
              <path d="M10 5 H19 M1 15 H10" />
              <circle cx="15.500" cy="15" r="3" />
            </svg>
          </SiteInfo>
          <Url>
            <Domain>mytimetable.mcmaster.ca</Domain>
            /criteria.jsp?access=0&lang=en&tip=2&page=criteria&scratch=0&advice=0&legend=1&term=3202430&sort=none&filters=liiiiiiiii&bbs=&ds=&cams=MCMSTiOFF_MCMSTiMCMST_MCMSTiSNPOL_MCMSTiCON_MCMSTiMHK&locs=any&isrts=any&ses=any&pl=&pac=1&course_0_0=COMPSCI-4ZP6A&va_0_0=82...
          </Url>
          <ToolButton $w={48}><MdOutlineZoomOut size={29} /></ToolButton>
          <ToolButton $w={50}><MdStarBorder size={28} /></ToolButton>
        </Omnibox>
        <ToolButton>
          <svg width="26" height="26" viewBox="0 0 26 26">
            <path d="M6 7.500 H12 V18 H10.500 V23 Q10.500 24 9.500 24 H8 Q7 24 7 23 L6.500 18 Q1 17 1 12.800 Q1 8 6 7.500Z" fill="#1f3c5b" />
            <path d="M12 8 Q19 7 22 2 V23 Q19 18 12 18Z" fill="#ff6a35" />
            <path d="M23.500 10.500 Q26 13 23.500 15.500Z" fill="#1f3c5b" />
          </svg>
        </ToolButton>
        <ToolButton $w={58}><MdOutlineExtension size={29} /></ToolButton>
        <Divider $m="0 24px 0 8px" />
        <Avatar />
        <ToolButton><MdMoreVert size={29} /></ToolButton>
      </Toolbar>
    </ToolbarBack>
    <BookmarksBar>
      <svg width="22" height="22" viewBox="0 0 22 22" fill="none" stroke="#474747" strokeWidth="2.400">
        <rect x="1.200" y="1.200" width="6.600" height="6.600" />
        <rect x="14.200" y="1.200" width="6.600" height="6.600" />
        <rect x="1.200" y="14.200" width="6.600" height="6.600" />
        <rect x="14.200" y="14.200" width="6.600" height="6.600" />
      </svg>
      <Divider $m="0 0 0 23px" />
      <Bookmark $ml={20} $w={150} $ls={-0.3}>
        <svg width="25" height="25" viewBox="0 0 25 25">
          <path d="M4 6 L7 7 L9 3 L11 6 L14 1 L15 5 L19 3 L19 7 L23 7 L21 11 L24 13 L21 15 L22 20 Q17 25 12 24 Q3 24 2 18 L0 16 L3 14 L0 11 L4 10Z" fill="#f0301c" />
          <circle cx="12.500" cy="15.500" r="8" fill="#ffd21c" />
          <path d="M12.500 15.500 q2 -1.500 2.500 .8 q-.5 3 -3.500 2.500 q-3.500 -1.500 -2 -5 q2.500 -3.500 6.500 -1.500 q3.500 3 1.500 7" fill="none" stroke="#f06a10" strokeWidth="1.600" />
        </svg>
        LN1-2023.pdf
      </Bookmark>
      <Bookmark $ml={16} $w={112} $gap={9} $ls={-0.6}>
        <svg width="24" height="24" viewBox="0 0 24 24">
          <circle cx="12" cy="12" r="10.500" fill="#5f6368" />
          <path d="M11 3 Q16 3 15 6 Q12 7 12 9 H8.500 V12 H13 Q15 13 15 15 H18 Q20 13 21 15 Q19 20 14 21 V18 Q11 18 11 15 L4 9 Q6 4 11 3Z" fill="#fff" opacity=".9" />
        </svg>
        New Tab
      </Bookmark>
      <Bookmark $ml={13}>
        <svg width="25" height="25" viewBox="0 0 25 25">
          <path d="M0 0 H25 L12 25 H9.500Z" fill="#14d3c6" />
          <path d="M5.500 4 H12 L6.500 12 Z M17 5 H20 L11 21 V13 L15 11 H11Z" fill="#fff" />
        </svg>
        Cute Icons &amp; Symbols
      </Bookmark>
      <Divider $m="0 23px 0 auto" />
      <svg width="27" height="20" viewBox="0 0 27 20">
        <path d="M2 1.500 H10 L13 4.500 H25 V18.500 H2Z" fill="none" stroke="#474747" strokeWidth="2.400" strokeLinejoin="round" />
      </svg>
      <Bookmark $ml={10} $ls={-0.5}>All Bookmarks</Bookmark>
    </BookmarksBar>
  </>
);

const Schedule = () => (
  <RightColumn>
    <ResultBar>
      <BarIcon width="48" height="64" viewBox="0 0 48 64" fill="none" stroke="#000" strokeWidth="7.500" strokeLinecap="round" strokeLinejoin="round">
        <path d="M6.500 6 V59 M42 6 L18 32.500 L42 59" />
      </BarIcon>
      <BarIcon $ml={29} width="36" height="64" viewBox="0 0 36 64" fill="none" stroke="#000" strokeWidth="7.500" strokeLinecap="round" strokeLinejoin="round">
        <path d="M29 5.500 L6.500 31.500 L29 58" />
      </BarIcon>
      <ResultText>
        <ResultTitle>RESULT</ResultTitle>
        <ResultCount>1 of 5</ResultCount>
      </ResultText>
      <BarIcon $ml={87} width="36" height="64" viewBox="0 0 36 64" fill="none" stroke="#000" strokeWidth="7.500" strokeLinecap="round" strokeLinejoin="round">
        <path d="M7 5.500 L30 31.500 L7 58" />
      </BarIcon>
      <BarIcon $ml={49} width="46" height="64" viewBox="0 0 46 64" fill="none" stroke="#000" strokeWidth="7.500" strokeLinecap="round" strokeLinejoin="round">
        <path d="M5 5.500 L29 31.500 L5 58 M40 5 V58" />
      </BarIcon>
      <BarIcon $ml={165} $mt={8} width="56" height="56" viewBox="0 0 56 56" fill="none" stroke="#000" strokeWidth="2.600" strokeLinejoin="round">
        <path d="M4 2 H41 L53.500 13 V51 Q53.500 53.500 51 53.500 H4 Q2 53.500 2 51 V4 Q2 2 4 2Z" />
        <path d="M16 2 V16.500 H40 V2 M13 53 V30.500 H42.500 V53" />
      </BarIcon>
      <BarIcon $ml={22} $mt={-7} width="81" height="74" viewBox="0 0 81 74" fill="none" stroke="#000" strokeWidth="5" strokeMiterlimit="10">
        <path d="M40.500 10 L48.200 29.500 H71.500 L53 43.500 L60 64.500 L40.500 51.500 L21 64.500 L28 43.500 L9.500 29.500 H32.800Z" />
      </BarIcon>
    </ResultBar>
    <Board>
      {years.map((y, i) => (
        <YearColumn key={i} $w={y.w}>
          <SemesterLabel $h={y.fallH} $lh={y.fallLh} $left={y.fallX}>Fall Semester</SemesterLabel>
          <CourseList $left={y.left}>
            {fallCourses.map((slot, n) => (
              <CourseCard key={n} slot={slot} info={i === 0 ? firstYear[n] : undefined} />
            ))}
          </CourseList>
          <SemesterLabel $h={29} $lh={29} $left={y.winterX}>Winter Semester</SemesterLabel>
          <CourseList $left={y.left}>
            {winterCourses.map((slot, n) => (
              <CourseCard key={n} slot={slot} />
            ))}
          </CourseList>
        </YearColumn>
      ))}
    </Board>
  </RightColumn>
);

export default function App() {
  return (
    <Screen>
      <GlobalStyle />
      <BrowserChrome />
      <Viewport>
        <Page>
          <Header>
            <LogoCell>
              <LogoSvg width="272" height="164" viewBox="0 0 272 164">
                <McMasterMark color={slate} />
              </LogoSvg>
            </LogoCell>
            <Brand>
              <BrandName>
                Degree<BrandTail>Flow</BrandTail>
              </BrandName>
              <BrandRule />
            </Brand>
            <UserBar>
              <UserName>Sarah Neelands</UserName>
              <Term>2024 Fall</Term>
              <Hamburger>
                <HamburgerBar />
                <HamburgerBar />
                <HamburgerBar />
              </Hamburger>
            </UserBar>
          </Header>
          <Band />
          <Main>
            <LeftColumn>
              <GenerateButton>Generate Schedules</GenerateButton>
              <UploadRow>
                <UploadField>{"Upload Unofficial Transcript   .pdf"}</UploadField>
                <UploadButton>{"Upload  Transcript"}</UploadButton>
              </UploadRow>
              <FilterPanel>
                <FilterTitle>Filters</FilterTitle>
                {filters.map((f) => (
                  <React.Fragment key={f.label}>
                    <FilterRow $shift={f.shift} $gap={f.gap}>
                      <FilterLabel $base={f.base} $ls={f.ls} $in={f.indent}>{f.label}</FilterLabel>
                      <IconSlot $top={f.icon}>
                        <Toggle open={f.open} />
                      </IconSlot>
                    </FilterRow>
                    {f.open && (
                      <TermChecks>
                        <span>Fall</span>
                        <TermBox state="yes" />
                        <span>Winter</span>
                        <TermBox />
                        <span>Spring</span>
                        <TermBox state="no" />
                        <span>Summer</span>
                        <TermBox up={-1} />
                      </TermChecks>
                    )}
                  </React.Fragment>
                ))}
              </FilterPanel>
            </LeftColumn>
            <Schedule />
          </Main>
          <Footer>
            <Halftone width="410" height="110" viewBox="0 0 410 110">
              {halftoneDots.map(([x, y, r, o], i) => (
                <circle key={i} cx={x} cy={y} r={r} fill="#c4665a" fillOpacity={o} />
              ))}
            </Halftone>
            <FooterLogo />
            <Address>
              <span>1280 Main Street West.</span>
              <span>Hamilton, Ontario L8S 4L8.</span>
              <Phone>(905) 525-9140</Phone>
            </Address>
            <Copyright>© McMaster University</Copyright>
          </Footer>
        </Page>
        <Scrollbar>
          <svg width="12" height="7" viewBox="0 0 12 7"><path d="M0 7 L6 0 L12 7Z" fill="#a3a3a3" /></svg>
          <svg width="12" height="7" viewBox="0 0 12 7"><path d="M0 0 L6 7 L12 0Z" fill="#a3a3a3" /></svg>
        </Scrollbar>
      </Viewport>
      <Taskbar>
        <svg width="36" height="36" viewBox="0 0 36 36">
          <defs>
            <linearGradient id="win" x1="0" y1="0" x2="1" y2="1">
              <stop offset="0" stopColor="#7df3ff" />
              <stop offset="1" stopColor="#0b95f5" />
            </linearGradient>
          </defs>
          <path d="M1.500 0 H17 V17 H0 V1.500 Q0 0 1.500 0Z M18.500 0 H34 Q35.500 0 35.500 1.500 V17 H18.500Z M0 18.500 H17 V35.500 H1.500 Q0 35.500 0 34Z M18.500 18.500 H35.500 V34 Q35.500 35.500 34 35.500 H18.500Z" fill="url(#win)" />
        </svg>
        <SearchPill>
          <svg width="24" height="24" viewBox="0 0 24 24" fill="none" stroke="#222" strokeWidth="2.400" strokeLinecap="round">
            <circle cx="10" cy="10" r="8" />
            <path d="M16 16 L22 22" strokeWidth="3" />
          </svg>
          <SearchLabel>Search</SearchLabel>
          <svg width="68" height="38" viewBox="0 0 68 38">
            <path d="M0 31 Q10 23 34 23 Q58 23 68 30 Q64 36 56 37 H10 Q3 36 0 31Z" fill="#e2bd92" />
            <path d="M7 16 L30 10 L34 25 L12 31Z" fill="#3fae57" />
            <path d="M7 14 Q13 9 19 12 Q24 8 30 9 L33 23 Q27 22 22 26 Q16 24 11 28Z" fill="#f5f5fb" stroke="#a9adc9" strokeWidth=".8" />
            <path d="M19 12 L22 26 M11 17 L17 15.500 M12 21 L18 19.500 M23 14 L28 13" stroke="#8f94b5" strokeWidth="1" />
            <path d="M24 20 L33 6 L36 8 L28 22Z" fill="#ffa726" />
            <path d="M33 6 L35 3 L38 5 L36 8Z" fill="#e5484d" />
            <rect x="43" y="4" width="20" height="28" rx="8" fill="#1581f5" />
            <path d="M48 5 Q53 -3 58 5" fill="none" stroke="#0b56c4" strokeWidth="2" />
            <rect x="45.500" y="18" width="15" height="11" rx="4" fill="#0b5fd6" />
            <rect x="44" y="29" width="18" height="3" rx="1.500" fill="#6a3fd0" />
          </svg>
        </SearchPill>
        {apps.map(({ id, Icon, run, active }) => (
          <TaskItem key={id}>
            {active && <ActiveTile />}
            <TaskIcon width="36" height="36" viewBox="0 0 36 36">
              <Icon />
            </TaskIcon>
            {run && <Running $w={run} $active={active} />}
          </TaskItem>
        ))}
        <Clock>
          10:29 PM
          <br />
          2024-10-31
        </Clock>
      </Taskbar>
    </Screen>
  );
}
